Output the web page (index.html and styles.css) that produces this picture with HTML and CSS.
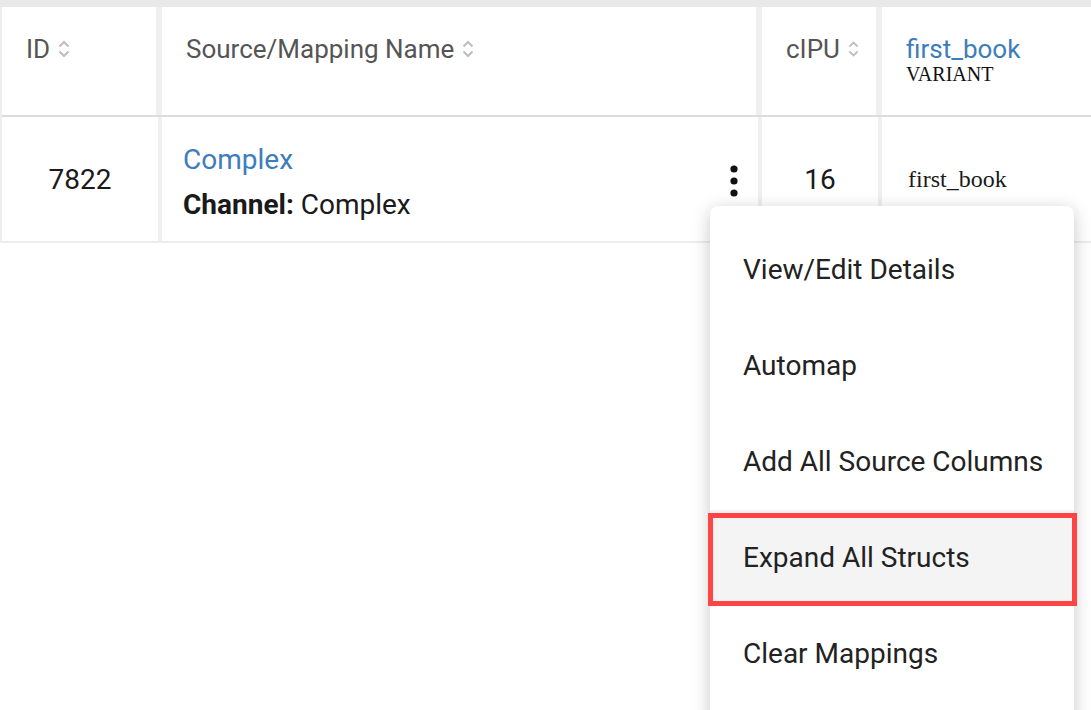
FILE: index.html
```html
<!DOCTYPE html>
<html lang="en">
<head>
    <title>Mappings</title>
    <link rel="stylesheet" href="styles.css">
</head>
<body>
<div class="top_band"></div>
<div class="table">
    <div class="row head_row">
        <div class="cell head_cell">
            <span>ID</span>
            <svg class="sort_icon" viewBox="0 0 12 20"><path d="M1.5 7.5 L6 3 L10.5 7.5 M1.5 12.5 L6 17 L10.5 12.5"/></svg>
        </div>
        <div class="cell head_cell">
            <span>Source/Mapping Name</span>
            <svg class="sort_icon" viewBox="0 0 12 20"><path d="M1.5 7.5 L6 3 L10.5 7.5 M1.5 12.5 L6 17 L10.5 12.5"/></svg>
        </div>
        <div class="cell head_cell head_right">
            <span>cIPU</span>
            <svg class="sort_icon" viewBox="0 0 12 20"><path d="M1.5 7.5 L6 3 L10.5 7.5 M1.5 12.5 L6 17 L10.5 12.5"/></svg>
        </div>
        <div class="cell head_cell head_stack">
            <a class="link" href="#">first_book</a>
            <span class="type_label">VARIANT</span>
        </div>
    </div>
    <div class="row body_row">
        <div class="cell body_cell centered">7822</div>
        <div class="cell body_cell name_cell">
            <div class="name_lines">
                <a class="link" href="#">Complex</a>
                <div><b>Channel:</b> Complex</div>
            </div>
            <svg class="kebab" viewBox="0 0 8 32">
                <circle cx="4" cy="4" r="3.6"/>
                <circle cx="4" cy="16" r="3.6"/>
                <circle cx="4" cy="28" r="3.6"/>
            </svg>
        </div>
        <div class="cell body_cell centered">16</div>
        <div class="cell body_cell variant_value">first_book</div>
    </div>
</div>

<ul class="menu">
    <li>View/Edit Details</li>
    <li>Automap</li>
    <li>Add All Source Columns</li>
    <li class="active">Expand All Structs</li>
    <li>Clear Mappings</li>
</ul>
</body>
</html>
```

FILE: styles.css
```css
body {
    margin: 0;
    font-family: Roboto, "Noto Sans", sans-serif;
    background: #ffffff;
    color: #212121;
    position: relative;
    height: 710px;
    overflow: hidden;
}

.top_band {
    height: 7px;
    background: #e9e9e9;
}

.table {
    border-left: 2px solid #eeeeee;
}

.row {
    display: grid;
}

.head_row {
    grid-template-columns: 154px 600px 120px 1fr;
    height: 108px;
    border-bottom: 2px solid #dcdcdc;
}

.body_row {
    grid-template-columns: 156px 600px 120px 1fr;
    height: 124px;
    border-bottom: 2px solid #ececec;
}

.cell + .cell {
    border-left: 6px solid #f0f0f0;
}

.body_row .cell + .cell {
    border-left-width: 4px;
}

.head_cell {
    display: flex;
    align-items: flex-start;
    gap: 8px;
    padding: 27px 24px 0 24px;
    font-size: 26px;
    line-height: 30px;
    color: #555555;
}

.head_right {
    justify-content: flex-end;
    padding-right: 17px;
}

.head_stack {
    flex-direction: column;
    gap: 0;
}

.sort_icon {
    width: 12px;
    height: 20px;
    margin-top: 5px;
    fill: none;
    stroke: #bdbdbd;
    stroke-width: 2;
}

.link {
    color: #3d7dbb;
    text-decoration: none;
}

.type_label {
    font-family: "Liberation Serif", serif;
    font-size: 20px;
    line-height: 20px;
    color: #111111;
}

.body_cell {
    display: flex;
    align-items: center;
    font-size: 28px;
    color: #1a1a1a;
}

.centered {
    justify-content: center;
}

.name_cell {
    justify-content: space-between;
    padding: 0 20px 0 21px;
}

.name_lines {
    line-height: 45px;
    margin-top: 6px;
}

.name_lines b {
    font-weight: 700;
}

.kebab {
    width: 8px;
    height: 32px;
    fill: #111111;
    margin-top: 4px;
}

.variant_value {
    font-family: "Liberation Serif", serif;
    font-size: 24px;
    padding-left: 26px;
}

/* dropdown opened from the row's kebab button */
.menu {
    position: absolute;
    left: 710px;
    top: 206px;
    width: 364px;
    margin: 0;
    padding: 16px 0 60px 0;
    list-style: none;
    background: #ffffff;
    border-radius: 8px;
    box-shadow: 0 4px 18px rgba(0, 0, 0, 0.22);
}

.menu li {
    position: relative;
    height: 96px;
    line-height: 96px;
    padding-left: 33px;
    font-size: 28px;
    color: #222222;
}

.menu li.active {
    background: #f4f4f4;
}

.menu li.active::after {
    content: "";
    position: absolute;
    top: 3px;
    bottom: 0;
    left: -2px;
    right: -3px;
    border: 5px solid #ff4444;
}
```
